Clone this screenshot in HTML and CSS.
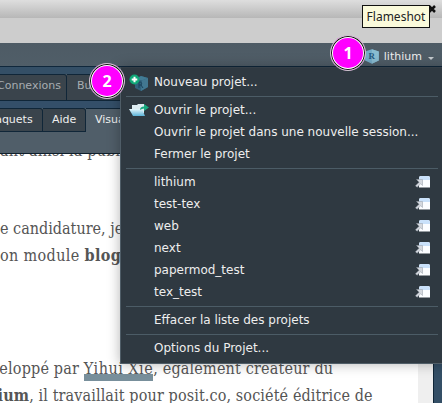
FILE: index.html
```
<!DOCTYPE html>
<html lang="fr">
<head>
<meta charset="utf-8">
<title>RStudio</title>
<link rel="stylesheet" href="styles.css">
</head>
<body>
<svg class="defs" aria-hidden="true">
  <linearGradient id="folder" x2="0" y2="1"><stop stop-color="#e6f7fc"/><stop offset="1" stop-color="#5bb3d8"/></linearGradient>
  <symbol id="open" viewBox="0 0 16 14">
    <path d="M4 12.500V3q0-2 2-2h7q2 0 2 2v9.500z" fill="#fbfdff"/><path d="M4 5V3q0-2 2-2h7q2 0 2 2v2z" fill="#c9e1fa"/>
    <path d="M1.500 4.500h6v6L5.700 8.800 2 12.300.5 10.800l3.600-3.600z" fill="#d5d9df" stroke="#929ba4" stroke-width=".5"/>
  </symbol>
</svg>
<div class="app">
  <div class="titlebar"><svg class="controls" viewBox="0 0 42 18"><path d="M3 10h6v2H3zM18 8h4v4h-4zM20 8V6h4v4h-2" fill="none" stroke="#aaa"/><path d="M36 6l6 6M42 6l-6 6" stroke="#111" stroke-width="2.500"/></svg></div>
  <div class="menubar"></div>
  <div class="toolbar">
    <svg class="cube" viewBox="0 0 14 15"><path d="M7 0l7 2.500v9L7 15 0 11.500v-9z" fill="#75adc9"/><path d="M7 0l7 2.500v9L7 15z" fill="#8abdd2"/><text x="3.500" y="10.500">R</text></svg>
    <span class="project">lithium</span><i class="caret"></i>
  </div>
  <div class="gap"></div>
  <div class="tabs upper"><span class="tab connections">Connexions</span><span class="tab build">Build</span></div>
  <div class="splitter"></div>
  <div class="tabs lower"><span class="tab packages">Paquets</span><span class="tab help">Aide</span><span class="tab active">Visualiseur</span></div>
  <div class="viewbar"></div>
  <div class="viewer">
    <div class="page">
      <p class="line l1">ant ainsi la publi</p>
      <p class="line l2">e candidature, je</p>
      <p class="line l3">on module <b>blogdown</b></p>
      <p class="line l4">veloppé par <a>Yihui Xie</a>, également créateur du</p>
      <p class="line l5"><b>hium</b>, il travaillait pour posit.co, société éditrice de</p>
    </div>
    <div class="scroll"></div>
    <div class="edge"></div>
  </div>
</div>
<div class="menu">
  <div class="item"><svg class="icon new" viewBox="0 0 20 17"><path d="M12 2l7 2v9l-7 4-6-3V5z" fill="#31617c"/><path d="M12 2l7 2-6 2.500L6 5z" fill="#417b94"/><path d="M13 6.500l6-2.500v9l-7 4z" fill="#427791"/><path d="M10 8v6M10 8q4 0 2 3h-2m2 0l2 3" stroke="#1b435d" fill="none"/><circle cx="5.500" cy="5.500" r="5" fill="#10a878"/><path d="M5.500 2.700v5.600M2.700 5.500h5.600" stroke="#fff" stroke-width="2"/></svg><span>Nouveau projet...</span></div>
  <hr>
  <div class="item"><svg class="icon folder" viewBox="0 0 20 14"><path d="M3 6V2h5l1-1h6v9H3z" fill="#ddecf2"/><path d="M0 6h13l3 7H4z" fill="url(#folder)"/><path d="M11 7q0-3.500 4-3.500V1l5 3.500L15 8V5.500q-2 0-4 1.500z" fill="#18aa7f"/></svg><span>Ouvrir le projet...</span></div>
  <div class="item"><span>Ouvrir le projet dans une nouvelle session...</span></div>
  <div class="item"><span>Fermer le projet</span></div>
  <hr>
  <div class="item"><span>lithium</span><svg class="open"><use href="#open"/></svg></div>
  <div class="item"><span>test-tex</span><svg class="open"><use href="#open"/></svg></div>
  <div class="item"><span>web</span><svg class="open"><use href="#open"/></svg></div>
  <div class="item"><span>next</span><svg class="open"><use href="#open"/></svg></div>
  <div class="item"><span>papermod_test</span><svg class="open"><use href="#open"/></svg></div>
  <div class="item"><span>tex_test</span><svg class="open"><use href="#open"/></svg></div>
  <hr>
  <div class="item"><span>Effacer la liste des projets</span></div>
  <hr>
  <div class="item"><span>Options du Projet...</span></div>
</div>
<div class="tooltip">Flameshot</div>
<div class="marker one">1</div>
<div class="marker two">2</div>
</body>
</html>
```
FILE: styles.css
```
* { box-sizing: border-box; }
body { margin: 0; width: 442px; height: 403px; overflow: hidden; position: relative; font: 11px "DejaVu Sans", sans-serif; color: #eee; }
.defs { position: absolute; width: 0; height: 0; }
.app { height: 403px; display: flex; flex-direction: column; overflow: hidden; }
.app > div { flex: none; }
.titlebar { height: 18px; background: linear-gradient(#dedede, #b7b7b7); display: flex; justify-content: flex-end; padding-right: 7px; }
.controls { width: 42px; height: 18px; overflow: visible; }
.menubar { height: 25px; background: #cdcdcd; }
.toolbar { height: 23px; background: linear-gradient(#4e5b65, #505e68); display: flex; align-items: center; padding: 4px 8px 0 365px; }
.cube { width: 14px; height: 15px; margin-right: 5px; }
.cube text { font: bold 9px "Liberation Serif", serif; fill: #265b81; }
.project { width: 45px; line-height: 20px; }
.caret { border: 3px solid transparent; border-top-color: #c5cbd0; border-bottom: 0; margin-top: 3px; }
.gap { height: 8px; background: #344f66; border-top: 1px solid #10283c; }
.tabs { display: flex; overflow: hidden; background: #4f5d67; }
.tab { flex: none; background: #3a444c; border: 1px solid #102638; border-left: 0; white-space: nowrap; border-radius: 0 3px 0 0; }
.upper { height: 27px; color: #a7adb1; }
.upper .tab { line-height: 21px; }
.connections { width: 67px; text-indent: -3px; }
.build { width: 80px; padding-left: 10px; }
.splitter { height: 7px; background: #344f69; }
.lower { height: 24px; }
.lower .tab { line-height: 21px; }
.packages { width: 43px; text-indent: -11px; }
.help { width: 43px; padding-left: 9px; }
.lower .active { width: 100px; padding-left: 9px; background: #505e69; border-bottom: 0; }
.viewbar { height: 22px; background: #505e69; border-bottom: 1px solid #10202c; }
.viewer { height: 249px; display: flex; }
.page { width: 418px; height: 249px; background: #fff; overflow: hidden; color: #555; font: 16px "DejaVu Serif Condensed", "DejaVu Serif", serif; font-stretch: condensed; }
.scroll { width: 15px; background: #efefef; }
.edge { width: 9px; background: #344f66; border-left: 1px solid #102638; }
.line { margin: 0; height: 27px; line-height: 27px; white-space: nowrap; letter-spacing: .18px; }
.l1 { margin-top: -17px; }
.l2 { margin-top: 51px; letter-spacing: 0; }
.l3 { letter-spacing: .35px; }
.l4 { margin-top: 86px; text-indent: -9px; }
.l5 { text-indent: -13px; letter-spacing: .12px; }
.line a { display: inline-block; text-indent: 0; line-height: 24px; letter-spacing: .5px; background: linear-gradient(#788f9b, #788f9b) 0 100% / 100% 7px no-repeat; }
.menu { position: absolute; left: 120px; top: 67px; width: 330px; height: 297px; padding: 3px 0 0 5px; background: #2f3941; border: 1px solid #4f5d67; border-top-color: #343e46; box-shadow: 0 0 12px rgba(0,0,0,.3); font-size: 12px; }
.item { height: 22px; line-height: 22px; padding-left: 28px; width: 312px; display: flex; align-items: center; white-space: nowrap; }
.menu hr { width: 312px; height: 1px; border: 0; margin: 3px 0 2px; background: #4c5c66; }
.icon { width: 20px; margin: 0 5px 0 -25px; }
.new { height: 17px; margin-top: 1px; }
.folder { height: 14px; }
.open { width: 16px; height: 14px; margin-left: auto; margin-right: 7px; margin-bottom: 1px; }
.tooltip { position: absolute; left: 362px; top: 5px; width: 68px; height: 23px; border: 1px solid #111; background: #fafadb; color: #222; font: 12px/21px "Noto Sans", sans-serif; text-align: center; }
.marker { position: absolute; width: 36px; height: 36px; border-radius: 50%; background: #f0f; border: 1px solid #ccc; box-shadow: inset 0 0 0 1px #111, inset 0 0 0 2px #fff; color: #fff; font: bold 16px/34px "Open Sans", sans-serif; text-align: center; }
.one { left: 330px; top: 35px; }
.two { left: 89px; top: 63px; }
```
